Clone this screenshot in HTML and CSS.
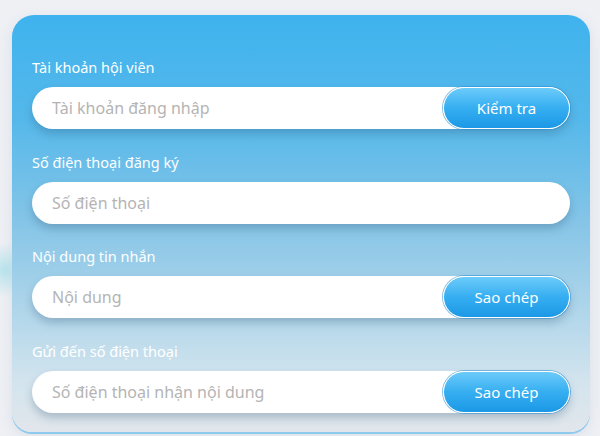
FILE: index.html
```html
<!DOCTYPE html>
<html lang="vi">
<head>
<meta charset="utf-8">
<title>Form</title>
<link rel="stylesheet" href="styles.css">
</head>
<body>
<div class="page">
  <div class="splash"></div>
  <form class="card">
    <div class="group">
      <label class="label">Tài khoản hội viên</label>
      <div class="field">
        <input class="input" type="text" placeholder="Tài khoản đăng nhập">
        <button type="button" class="btn">Kiểm tra</button>
      </div>
    </div>
    <div class="group">
      <label class="label">Số điện thoại đăng ký</label>
      <div class="field">
        <input class="input" type="text" placeholder="Số điện thoại">
      </div>
    </div>
    <div class="group">
      <label class="label">Nội dung tin nhắn</label>
      <div class="field">
        <input class="input" type="text" placeholder="Nội dung">
        <button type="button" class="btn">Sao chép</button>
      </div>
    </div>
    <div class="group">
      <label class="label">Gửi đến số điện thoại</label>
      <div class="field">
        <input class="input" type="text" placeholder="Số điện thoại nhận nội dung">
        <button type="button" class="btn">Sao chép</button>
      </div>
    </div>
  </form>
</div>
</body>
</html>
```
FILE: styles.css
```css
html, body {
  margin: 0;
  padding: 0;
  height: 100%;
  overflow: hidden;
}
body {
  background: #eef0f4;
  font-family: "Noto Sans", "Open Sans", sans-serif;
}
.page {
  position: relative;
  padding: 15px 10px 0 12px;
}
.splash {
  position: absolute;
  left: -20px;
  top: 240px;
  width: 50px;
  height: 60px;
  border-radius: 50%;
  background: radial-gradient(circle, rgba(120, 215, 230, 0.45), rgba(120, 215, 230, 0) 70%);
}
.card {
  position: relative;
  box-sizing: border-box;
  width: 578px;
  height: 417px;
  margin: 0;
  padding: 42px 20px 0 20px;
  border-radius: 22px 22px 20px 20px;
  background: linear-gradient(180deg, #3fb3ee 0%, #55b8ea 25%, #86c5e7 50%, #aed5ea 70%, #d3e4ee 88%, #e1e6eb 100%);
  box-shadow: 0 2px 0 0 #8ec9ee, 0 4px 14px rgba(80, 110, 140, 0.12);
  display: flex;
  flex-direction: column;
  gap: 22.7px;
}
.group {
  display: flex;
  flex-direction: column;
  gap: 10px;
}
.label {
  display: block;
  height: 20px;
  line-height: 20px;
  font-size: 14.5px;
  color: #ffffff;
}
.field {
  position: relative;
  height: 42px;
  border-radius: 21px;
  background: #ffffff;
  box-shadow: 0 5px 9px rgba(40, 80, 110, 0.28);
  display: flex;
  align-items: center;
}
.input {
  flex: 1;
  min-width: 0;
  height: 42px;
  box-sizing: border-box;
  border: none;
  outline: none;
  background: transparent;
  padding: 0 0 0 20px;
  font-family: "Noto Sans", "Open Sans", sans-serif;
  font-size: 16px;
  color: #333;
}
.input::placeholder {
  color: #b4b4b4;
}
.btn {
  flex: none;
  width: 127px;
  height: 42px;
  box-sizing: border-box;
  border: 1.5px solid #ffffff;
  border-radius: 21px;
  background: linear-gradient(180deg, #6ccbfa 0%, #36aef1 50%, #1b98e6 100%);
  box-shadow: 0 0 0 1px rgba(40, 140, 210, 0.55);
  color: #ffffff;
  font-family: "Noto Sans", "Open Sans", sans-serif;
  font-size: 15px;
  padding: 0;
  cursor: pointer;
}
```
